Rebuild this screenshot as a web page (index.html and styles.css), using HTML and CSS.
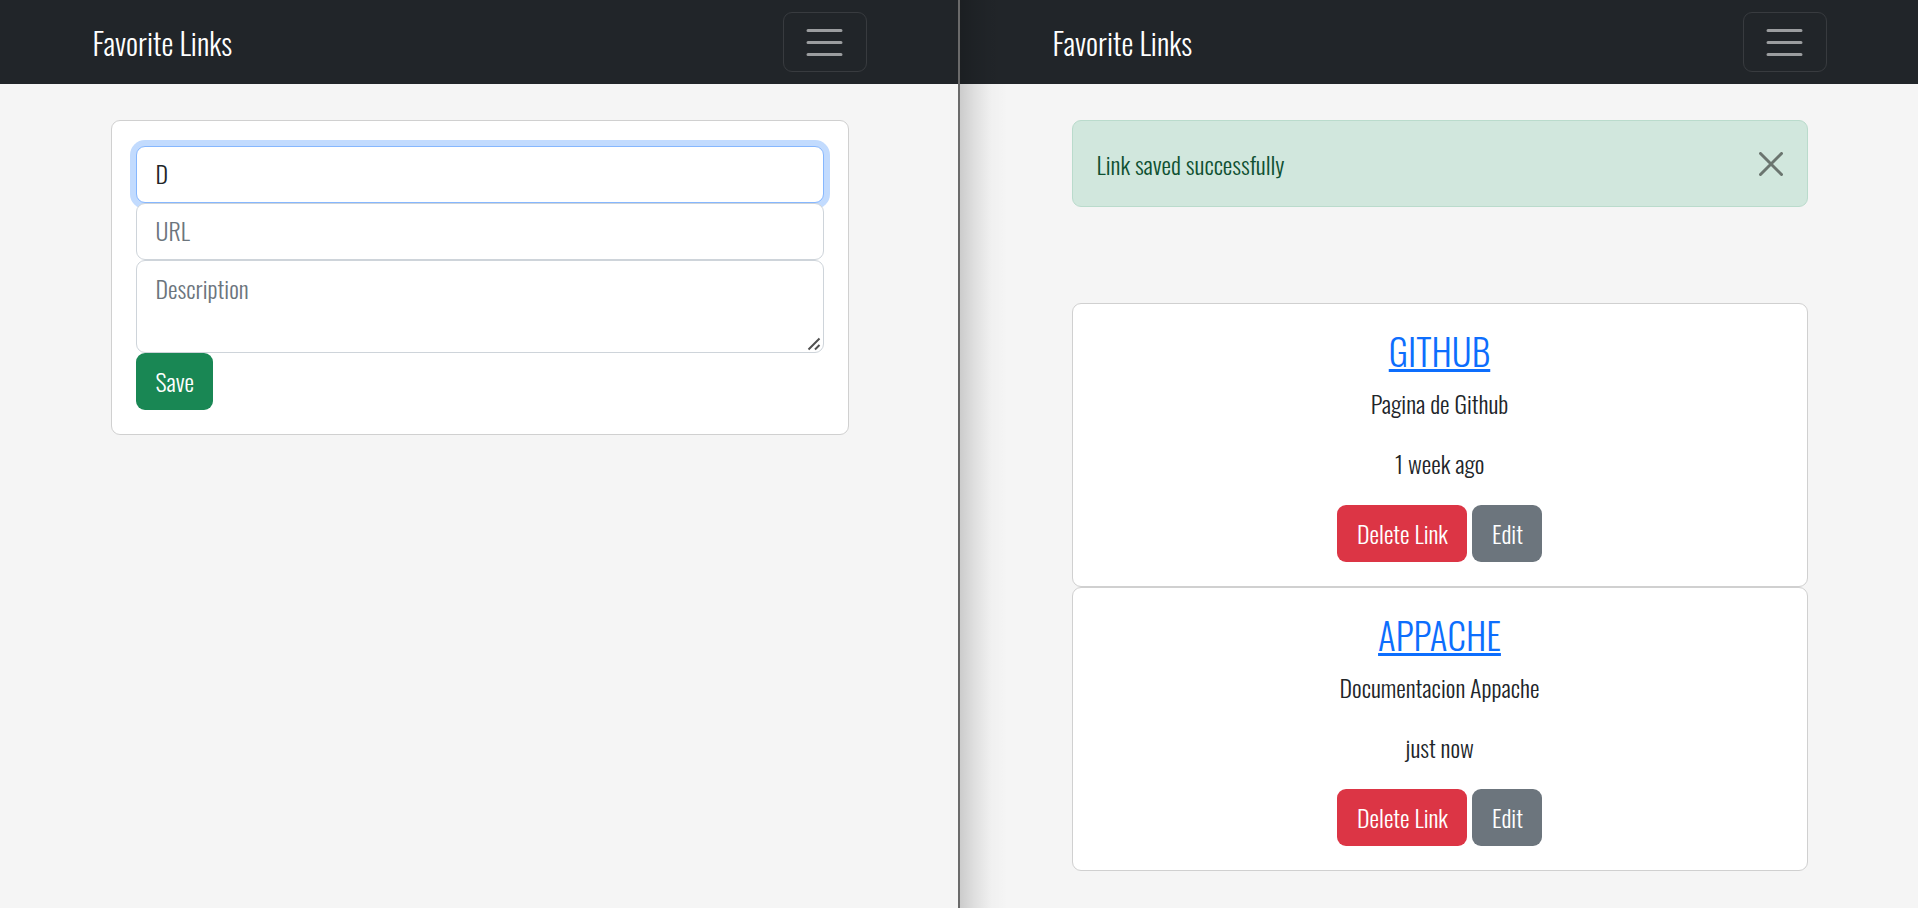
FILE: index.html
```html
<!DOCTYPE html>
<html lang="en">
<head>
  <meta charset="utf-8">
  <meta name="viewport" content="width=device-width, initial-scale=1">
  <title>Favorite Links</title>
  <link rel="stylesheet" href="styles.css">
</head>
<body>
  <div class="split">
    <section class="pane">
      <nav class="navbar">
        <div class="container navbar-row">
          <a class="brand" href="#">Favorite Links</a>
          <button class="toggler" type="button" aria-label="Toggle navigation">
            <svg class="toggler-icon" viewBox="0 0 30 30" aria-hidden="true"><path d="M4 7h22M4 15h22M4 23h22"/></svg>
          </button>
        </div>
      </nav>
      <main class="container content">
        <form class="card link-form">
          <input class="field focused" type="text" name="title" value="D" aria-label="Title">
          <input class="field" type="text" name="url" placeholder="URL" aria-label="URL">
          <div class="area-wrap">
            <textarea class="field area" name="description" placeholder="Description" aria-label="Description"></textarea>
            <svg class="grip" viewBox="0 0 14 14" aria-hidden="true"><path d="M1.500 12.500L12.500 1.500M8 12.500L12.500 8"/></svg>
          </div>
          <button class="btn save" type="submit">Save</button>
        </form>
      </main>
    </section>
    <section class="pane pane-right">
      <nav class="navbar">
        <div class="container navbar-row">
          <a class="brand" href="#">Favorite Links</a>
          <button class="toggler" type="button" aria-label="Toggle navigation">
            <svg class="toggler-icon" viewBox="0 0 30 30" aria-hidden="true"><path d="M4 7h22M4 15h22M4 23h22"/></svg>
          </button>
        </div>
      </nav>
      <main class="container content">
        <div class="alert" role="alert">
          <span>Link saved successfully</span>
          <button class="close" type="button" aria-label="Close">
            <svg class="close-icon" viewBox="0 0 24 24" aria-hidden="true"><path d="M1.500 1.500l21 21M22.500 1.500l-21 21"/></svg>
          </button>
        </div>
        <article class="card link-card">
          <h3 class="link-title"><a href="#">GITHUB</a></h3>
          <p class="text">Pagina de Github</p>
          <p class="text">1 week ago</p>
          <div class="actions">
            <button class="btn delete" type="button">Delete Link</button>
            <button class="btn edit" type="button">Edit</button>
          </div>
        </article>
        <article class="card link-card">
          <h3 class="link-title"><a href="#">APPACHE</a></h3>
          <p class="text">Documentacion Appache</p>
          <p class="text">just now</p>
          <div class="actions">
            <button class="btn delete" type="button">Delete Link</button>
            <button class="btn edit" type="button">Edit</button>
          </div>
        </article>
      </main>
    </section>
  </div>
</body>
</html>
```
FILE: styles.css
```css
* {
  box-sizing: border-box;
}

body {
  margin: 0;
  background: #f5f5f5;
  color: #212529;
  font-family: Oswald, "Roboto Condensed", sans-serif;
  font-size: 24px;
  font-weight: 300;
  line-height: 36px;
}

button,
input,
textarea {
  margin: 0;
  font: inherit;
}

.split {
  display: grid;
  grid-template-columns: 1fr 1fr;
  min-height: 100vh;
}

.pane {
  position: relative;
}

.pane-right .navbar,
.pane-right .content {
  border-left: 2px solid transparent;
}

.pane-right .navbar {
  background-clip: border-box;
}

.pane-right::before {
  content: "";
  position: absolute;
  top: 0;
  bottom: 0;
  left: -1px;
  width: 48px;
  background: linear-gradient(to right, rgba(0, 0, 0, 0.17), rgba(0, 0, 0, 0.09) 30%, rgba(0, 0, 0, 0.02) 65%, transparent);
  border-left: 2px solid #6a6a6a;
}

.navbar {
  padding: 12px 0;
  background: #212529;
}

.container {
  width: 100%;
  max-width: 810px;
  margin: 0 auto;
  padding: 0 18px;
}

.navbar-row {
  display: flex;
  align-items: center;
  justify-content: space-between;
}

.brand {
  color: #fff;
  font-size: 30px;
  line-height: 45px;
  text-decoration: none;
}

.toggler {
  display: flex;
  padding: 7px 19px 6px 18px;
  border: 1px solid #383b3f;
  border-radius: 9px;
  background: transparent;
}

.toggler-icon {
  width: 45px;
  height: 45px;
  fill: none;
  stroke: #9b9d9f;
  stroke-width: 2;
  stroke-linecap: round;
}

.content {
  padding: 36px;
}

.card {
  padding: 24px;
  border: 1px solid #d0d0d0;
  border-radius: 9px;
  background: #fff;
}

.link-form {
  display: flex;
  flex-direction: column;
  align-items: flex-start;
  padding-top: 25px;
}

.field {
  position: relative;
  display: block;
  width: 100%;
  height: 57px;
  padding: 8px 19px 11px;
  border: 1px solid #ced4da;
  border-radius: 9px;
  outline: 0;
  background: #fff;
  color: #212529;
}

.field::placeholder {
  color: #6c757d;
  opacity: 1;
}

.focused {
  border-color: #86b7fe;
  box-shadow: 0 0 0 6px #c2dbfe;
}

.area-wrap {
  position: relative;
  width: 100%;
}

.area {
  height: 93px;
  padding-top: 9px;
  resize: none;
}

.grip {
  position: absolute;
  right: 3px;
  bottom: 2px;
  width: 14px;
  height: 14px;
  fill: none;
  stroke: #505050;
  stroke-width: 2;
  pointer-events: none;
}

.btn {
  padding: 10px 19px 11px 20px;
  border: 0;
  border-radius: 9px;
  color: #fff;
}

.save {
  background: #198754;
}

.delete {
  background: #dc3545;
}

.edit {
  background: #6c757d;
}

.alert {
  display: flex;
  align-items: center;
  justify-content: space-between;
  margin-bottom: 96px;
  padding: 25px 24px 24px;
  border: 1px solid #badbcc;
  border-radius: 9px;
  background: #d1e7dd;
  color: #0f5132;
}

.close {
  display: flex;
  padding: 0;
  border: 0;
  background: transparent;
}

.close-icon {
  width: 24px;
  height: 24px;
  fill: none;
  stroke: #6b756f;
  stroke-width: 3;
  stroke-linecap: round;
}

.link-card {
  text-align: center;
}

.link-title {
  margin: 0 0 12px;
  font-size: 37px;
  font-weight: 300;
  line-height: 45px;
}

.link-title a {
  color: #0d6efd;
}

.text {
  margin: 0 0 24px;
}

.actions {
  display: flex;
  justify-content: center;
  gap: 5px;
}
```
